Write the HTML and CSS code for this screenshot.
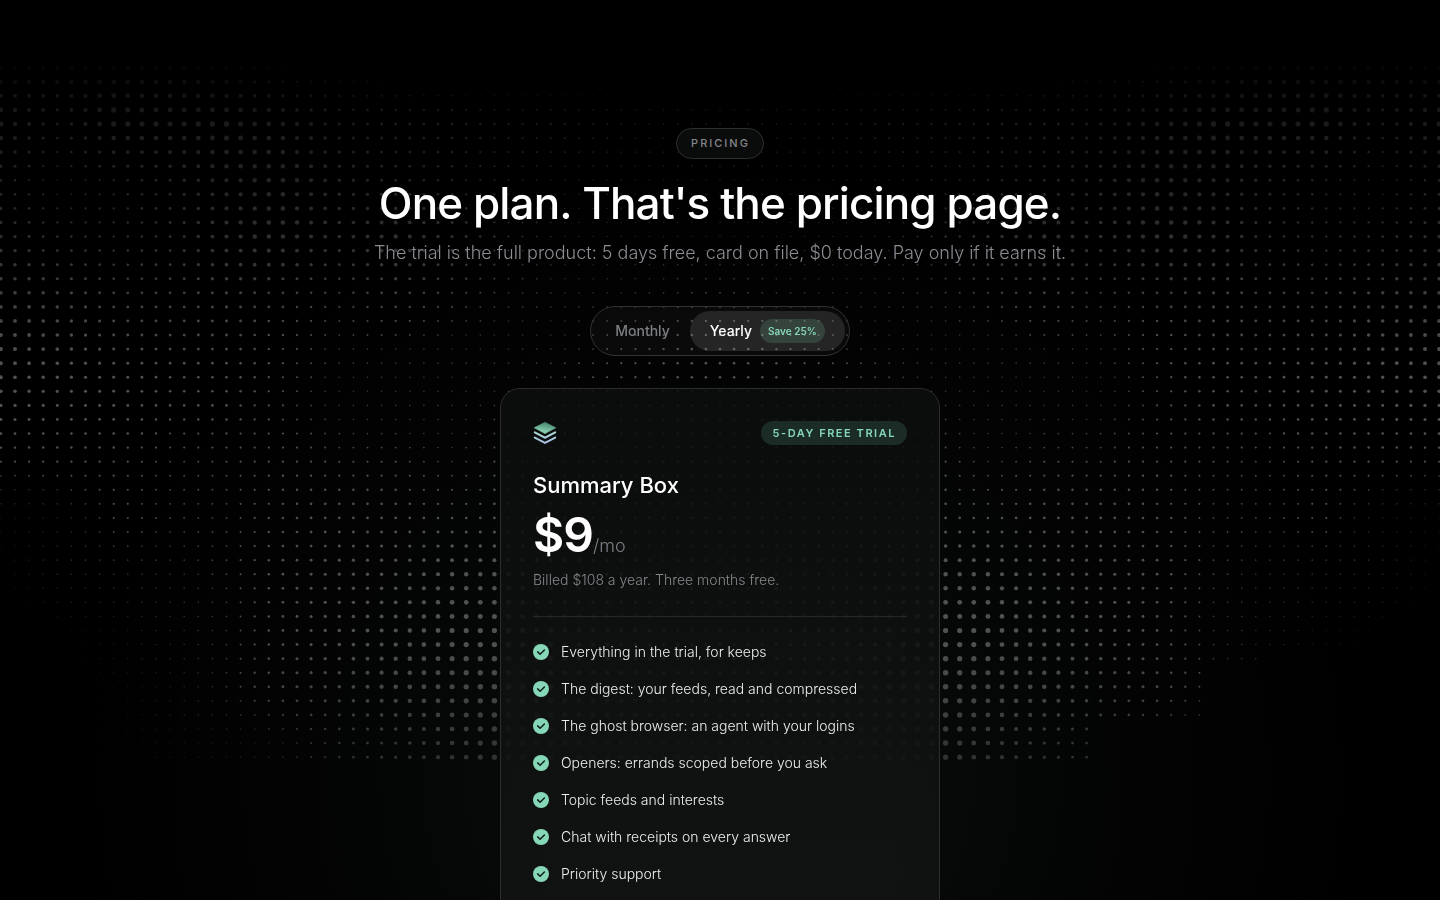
FILE: index.html
```html
<!DOCTYPE html>
<html lang="en">
<head>
<meta charset="utf-8">
<meta name="viewport" content="width=device-width, initial-scale=1">
<title>Pricing – Summary Box</title>
<link rel="stylesheet" href="styles.css">
</head>
<body>
<main class="pricing">
  <canvas class="halftone" id="halftone" aria-hidden="true"></canvas>
  <span class="eyebrow">PRICING</span>
  <h1 class="title">One plan. That's the pricing page.</h1>
  <p class="lead">The trial is the full product: 5 days free, card on file, $0 today. Pay only if it earns it.</p>

  <div class="toggle" role="group" aria-label="Billing period">
    <button class="option" type="button" aria-pressed="false">Monthly</button>
    <button class="option active" type="button" aria-pressed="true">Yearly <span class="save">Save 25%</span></button>
  </div>

  <section class="card">
    <header class="card-top">
      <svg class="logo" viewBox="0 0 24 24" aria-hidden="true">
        <defs>
          <linearGradient id="face" x1="0.7" y1="0" x2="0.4" y2="1"><stop offset="0" stop-color="#3f8067"/><stop offset="1" stop-color="#97e0bf"/></linearGradient>
          <linearGradient id="edge" gradientUnits="userSpaceOnUse" x1="0" y1="10" x2="0" y2="23"><stop offset="0" stop-color="#a9dccb"/><stop offset="1" stop-color="#a9bbe4"/></linearGradient>
        </defs>
        <path d="M12 1.2 22.8 6.8 12 12.6 1.2 6.8Z" fill="url(#face)" stroke="url(#face)" stroke-width="0.6" stroke-linejoin="round"/>
        <path d="M1.8 11.4 12 16.7 22.2 11.4 M1.8 16.6 12 21.9 22.2 16.6" fill="none" stroke="url(#edge)" stroke-width="2.1" stroke-linecap="round" stroke-linejoin="round"/>
      </svg>
      <span class="trial">5-DAY FREE TRIAL</span>
    </header>
    <h2 class="plan">Summary Box</h2>
    <p class="price"><strong class="amount">$9</strong><span class="per">/mo</span></p>
    <p class="billing">Billed $108 a year. Three months free.</p>
    <ul class="features">
      <li class="feature"><svg class="tick" viewBox="0 0 16 16" aria-hidden="true"><circle cx="8" cy="8" r="8"/><path d="M4.7 7.9 7.1 10.2 11.4 6"/></svg>Everything in the trial, for keeps</li>
      <li class="feature"><svg class="tick" viewBox="0 0 16 16" aria-hidden="true"><circle cx="8" cy="8" r="8"/><path d="M4.7 7.9 7.1 10.2 11.4 6"/></svg>The digest: your feeds, read and compressed</li>
      <li class="feature"><svg class="tick" viewBox="0 0 16 16" aria-hidden="true"><circle cx="8" cy="8" r="8"/><path d="M4.7 7.9 7.1 10.2 11.4 6"/></svg>The ghost browser: an agent with your logins</li>
      <li class="feature"><svg class="tick" viewBox="0 0 16 16" aria-hidden="true"><circle cx="8" cy="8" r="8"/><path d="M4.7 7.9 7.1 10.2 11.4 6"/></svg>Openers: errands scoped before you ask</li>
      <li class="feature"><svg class="tick" viewBox="0 0 16 16" aria-hidden="true"><circle cx="8" cy="8" r="8"/><path d="M4.7 7.9 7.1 10.2 11.4 6"/></svg>Topic feeds and interests</li>
      <li class="feature"><svg class="tick" viewBox="0 0 16 16" aria-hidden="true"><circle cx="8" cy="8" r="8"/><path d="M4.7 7.9 7.1 10.2 11.4 6"/></svg>Chat with receipts on every answer</li>
      <li class="feature"><svg class="tick" viewBox="0 0 16 16" aria-hidden="true"><circle cx="8" cy="8" r="8"/><path d="M4.7 7.9 7.1 10.2 11.4 6"/></svg>Priority support</li>
    </ul>
  </section>
</main>
<script src="halftone.js"></script>
</body>
</html>
```
FILE: styles.css
```css
* { box-sizing: border-box; margin: 0; padding: 0; }

body {
  background: #000;
  color: #fff;
  font-family: Inter, "Liberation Sans", sans-serif;
}

.pricing {
  position: relative;
  display: flex;
  flex-direction: column;
  align-items: center;
  min-height: 100vh;
  padding: 128px 24px 96px;
  overflow: hidden;
  background: radial-gradient(640px 620px at 50% 780px, #0a0f0e, #050807 40%, #020302 70%, #000);
}

.halftone {
  position: absolute;
  inset: 0;
  width: 100%;
  height: 780px;
}

.eyebrow, .title, .lead, .toggle, .card { position: relative; }

.eyebrow {
  padding: 7px 13px 7px 14px;
  border: 1px solid #2c2e30;
  border-radius: 16px;
  background: #0a0b0b;
  color: #85878c;
  font-size: 11px;
  font-weight: 500;
  line-height: 15px;
  letter-spacing: 2px;
}

.title {
  margin-top: 20px;
  font-size: 44px;
  font-weight: 500;
  line-height: 48px;
  letter-spacing: -0.02em;
  text-align: center;
}

.lead {
  margin-top: 12px;
  color: #8b8d93;
  font-size: 18px;
  font-weight: 300;
  line-height: 28px;
  text-align: center;
}

.toggle {
  display: flex;
  margin-top: 39px;
  padding: 4px;
  border: 1px solid #303332;
  border-radius: 25px;
  background: rgba(255, 255, 255, 0.03);
}

.option {
  display: flex;
  align-items: center;
  gap: 8px;
  height: 40px;
  padding: 0 20px;
  border: 0;
  border-radius: 20px;
  background: none;
  color: #7d7f85;
  font: 500 14px/20px Inter, "Liberation Sans", sans-serif;
  cursor: pointer;
}

.active { background: rgba(255, 255, 255, 0.11); color: #fff; }

.save {
  padding: 4px 8px;
  border-radius: 12px;
  background: rgba(134, 214, 184, 0.17);
  color: #86d6b8;
  font-size: 10px;
  font-weight: 600;
  line-height: 16px;
}

.card {
  width: 100%;
  max-width: 440px;
  margin-top: 32px;
  padding: 32px;
  border: 1px solid #2b2e2d;
  border-radius: 20px;
  background: linear-gradient(rgba(12, 14, 13, 0.88), rgba(18, 20, 19, 0.9));
}

.card-top { display: flex; align-items: center; justify-content: space-between; }

.logo { width: 24px; height: 24px; }

.trial {
  padding: 4px 11px 4px 12px;
  border-radius: 12px;
  background: #1b2c26;
  color: #86d6b8;
  font-size: 11px;
  font-weight: 600;
  line-height: 16px;
  letter-spacing: 0.14em;
}

.plan { margin-top: 26px; font-size: 22px; font-weight: 500; line-height: 28px; }

.price { display: flex; align-items: baseline; margin-top: 8px; }
.amount { font-size: 48px; font-weight: 600; line-height: 56px; letter-spacing: -0.02em; }
.per { color: #7d7f85; font-size: 18px; font-weight: 300; line-height: 24px; }

.billing { margin-top: 7px; color: #85878c; font-size: 14px; font-weight: 300; line-height: 20px; }

.features {
  display: grid;
  gap: 16px;
  margin-top: 26px;
  padding-top: 24px;
  border-top: 1px solid #252827;
  list-style: none;
}

.feature {
  display: flex;
  align-items: center;
  gap: 12px;
  color: #eceeed;
  font-size: 14px;
  font-weight: 300;
  line-height: 21px;
}

.tick { flex: none; width: 16px; height: 16px; fill: #86d6b8; }
.tick path { fill: none; stroke: #0c1f18; stroke-width: 1.5; stroke-linecap: round; stroke-linejoin: round; }
```
FILE: halftone.js
```js
// Dot radii, sampled every four dots from the left edge to the middle; mirrored on the right.
const RADII = [
  [1.5, 2, 2, 2, 1.5, 1, .8, .5, .5, .5, .5, .5, .5, .5],
  [2.2, 1.3, 2.3, 2.2, 2.3, 2, 1.4, 1.3, 1.2, 1, 1, .8, .8, .8],
  [1.2, .7, 1, 1.3, 1.8, 2, 1.5, 1.2, 1, .8, .7, .7, .7, .7],
  [1.5, 1.1, 1, 1.2, 1.8, 2, 1.5, 1.9, 1.4, .9, .7, .7, .7, .7],
  [1.6, 1.5, 1.2, 1.2, 1.4, 1.2, 1, 1.3, 1, .8, .7, .7, .8, .9],
  [1.8, 1.6, 1.3, 1.2, 1.2, 1, .7, .7, .6, .6, .7, .9, 1.1, 1.2],
  [1.5, 1.3, 1.3, 1.1, 1.1, .9, .6, .6, .6, .7, 1, 1, 1.1, 1.1],
  [.9, 1, 1, .8, .9, 1, .9, .9, .7, 1, 1, 1, 1.2, 1.2],
  [.2, .4, .9, .8, .8, 1.1, 1.2, 1.2, 1.1, 1.2, 1.2, 1.2, 1.2, 1.2],
  [.1, .5, .6, .6, .8, 1.2, 1.4, 1.5, 1.9, 1.9, 1.5, 1.4, 1.3, 1.3],
  [0, .1, .3, .5, .7, 1.2, 1.5, 1.8, 2.2, 2.3, 2, 1.7, 1.5, 1.5],
  [0, 0, .2, .4, .8, 1.3, 1.5, 2, 2.2, 2.5, 2.3, 2, 1.8, 1.8],
  [0, 0, .2, .4, .5, .7, 1.1, 1.4, 2, 2.5, 2.3, 2, 1.8, 1.8],
  [0, 0, .2, .4, .5, .7, 1.1, 1.4, 1.8, 2.2, 2, 1.8, 1.6, 1.6]
];
// Opacity by distance from the top.
const FADE = [[60, 0], [68, .03], [95, .09], [130, .13], [200, .18], [250, .23], [335, .35], [370, .38], [640, .36], [700, .29], [760, .2]];
const STEP = 14.1, STEP_Y = 14.07, TOP = 67.7, ROWS = 50;

function fade(y) {
  for (let i = 1; i < FADE.length; i++) {
    const [y0, a0] = FADE[i - 1], [y1, a1] = FADE[i];
    if (y <= y1) return a0 + (a1 - a0) * Math.max(0, y - y0) / (y1 - y0);
  }
  return 0;
}

function radius(fromEdge, row) {
  const u = Math.min(12.99, Math.max(0, fromEdge / 4)), v = row / 4;
  const i = Math.floor(u), j = Math.floor(v), s = u - i, t = v - j;
  const mix = r => r[i] * (1 - s) + r[i + 1] * s;
  return mix(RADII[j]) * (1 - t) + mix(RADII[Math.min(13, j + 1)]) * t;
}

function draw() {
  const canvas = document.getElementById("halftone");
  const w = canvas.width = canvas.clientWidth;
  canvas.height = canvas.clientHeight;
  const ctx = canvas.getContext("2d");
  const half = Math.ceil(w / 2 / STEP);
  for (let row = 0; row < ROWS; row++) {
    const y = TOP + row * STEP_Y;
    for (let col = -half; col <= half; col++) {
      if ((row > 46 && col > 26) || (row > 42 && col > 34) || (row > 41 && col > 38)) continue;
      const r = radius(51 - Math.abs(col), row);
      if (r < .15) continue;
      ctx.fillStyle = `rgba(210, 215, 212, ${fade(y) * Math.min(1, r / .9)})`;
      ctx.beginPath();
      ctx.arc(w / 2 + col * STEP, y, Math.max(.8, r * 1.15), 0, Math.PI * 2);
      ctx.fill();
    }
  }
}

draw();
addEventListener("resize", draw);
```
